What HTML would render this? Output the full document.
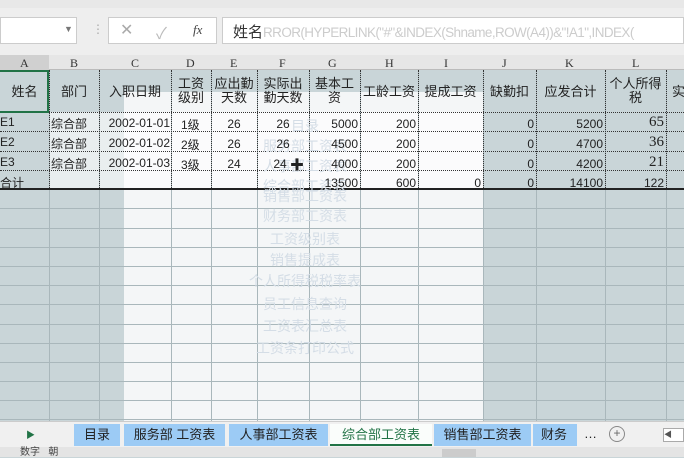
<!DOCTYPE html><html><head><meta charset="utf-8"><style>
*{margin:0;padding:0;box-sizing:border-box}
body{width:684px;height:457px;overflow:hidden;background:#c9d5d8;font-family:"Liberation Sans","Noto Sans CJK SC",sans-serif;position:relative;font-size:12px;color:#222}
.a{position:absolute}
.vl{position:absolute;top:70px;height:352px;width:0;border-left:1px solid #a9b7bb}
.hl{position:absolute;left:0;width:684px;height:0;border-top:1px solid #a9b7bb}
.dv{position:absolute;top:70px;height:120px;width:0;border-left:1px dotted #333}
.dh{position:absolute;left:0;width:684px;height:0;border-top:1px dotted #333}
.c{position:absolute;text-align:center;line-height:14px}
.r{position:absolute;text-align:right}
.tab{position:absolute;top:424px;height:22px;background:#9ccbf5;font-size:13px;line-height:22px;text-align:center;color:#222}
.wm{position:absolute;left:230px;width:150px;text-align:center;color:#d4dde6;font-size:14px}
</style></head><body>
<div class="a" style="left:0;top:0;width:684px;height:8px;background:#e8e8e8"></div>
<div class="a" style="left:0;top:8px;width:684px;height:47px;background:#eeeeee"></div>
<div class="a" style="left:0;top:17px;width:77px;height:27px;background:#fff;border:1px solid #ccc"></div>
<div class="a" style="left:64px;top:24px;color:#777;font-size:9px">▼</div>
<div class="a" style="left:92px;top:22px;color:#aaa">⋮</div>
<div class="a" style="left:108px;top:17px;width:109px;height:27px;background:#fff;border:1px solid #ccc"></div>
<div class="a" style="left:120px;top:20px;color:#aaa;font-size:16px">✕</div>
<div class="a" style="left:156px;top:20px;color:#bbb;font-size:16px">✓</div>
<div class="a" style="left:193px;top:22px;color:#444;font-style:italic;font-family:'Liberation Serif',serif;font-size:13px">fx</div>
<div class="a" style="left:222px;top:17px;width:462px;height:27px;background:#fff;border:1px solid #ccc;overflow:hidden"></div>
<div class="a" style="left:233px;top:21px;font-size:15px;color:#333;white-space:nowrap;width:451px;overflow:hidden">姓名<span style="color:#ccc;font-size:13.5px;letter-spacing:-0.6px">RROR(HYPERLINK("#"&amp;INDEX(Shname,ROW(A4))&amp;"!A1",INDEX(</span></div>
<div class="a" style="left:0;top:55px;width:684px;height:15px;background:#e6e6e6;border-bottom:1px solid #bbb"></div>
<div class="a" style="left:0;top:55px;width:49px;height:15px;background:#d0d0d0"></div>
<div class="a" style="top:56px;left:0;width:684px;font-family:'Liberation Serif',serif;font-size:12px;color:#333">
<span class="a" style="left:20px">A</span><span class="a" style="left:70px">B</span><span class="a" style="left:131px">C</span><span class="a" style="left:186px">D</span><span class="a" style="left:230px">E</span><span class="a" style="left:279px">F</span><span class="a" style="left:328px">G</span><span class="a" style="left:385px">H</span><span class="a" style="left:444px">I</span><span class="a" style="left:502px">J</span><span class="a" style="left:565px">K</span><span class="a" style="left:632px">L</span></div>
<div class="a" style="left:124px;top:92px;width:360px;height:330px;background:#f4f6f7"></div>
<div class="a" style="left:49px;top:112px;width:435px;height:77px;background:#fff;opacity:.6"></div>
<div class="vl" style="left:49px"></div><div class="vl" style="left:99px"></div><div class="vl" style="left:171px"></div><div class="vl" style="left:211px"></div><div class="vl" style="left:257px"></div><div class="vl" style="left:309px"></div><div class="vl" style="left:360px"></div><div class="vl" style="left:418px"></div><div class="vl" style="left:483px"></div><div class="vl" style="left:536px"></div><div class="vl" style="left:605px"></div><div class="vl" style="left:666px"></div>
<div class="hl" style="top:208px"></div><div class="hl" style="top:228px"></div><div class="hl" style="top:247px"></div><div class="hl" style="top:266px"></div><div class="hl" style="top:285px"></div><div class="hl" style="top:304px"></div><div class="hl" style="top:324px"></div><div class="hl" style="top:343px"></div><div class="hl" style="top:362px"></div><div class="hl" style="top:381px"></div><div class="hl" style="top:400px"></div><div class="hl" style="top:419px"></div>
<div class="dv" style="left:49px"></div><div class="dv" style="left:99px"></div><div class="dv" style="left:171px"></div><div class="dv" style="left:211px"></div><div class="dv" style="left:257px"></div><div class="dv" style="left:309px"></div><div class="dv" style="left:360px"></div><div class="dv" style="left:418px"></div><div class="dv" style="left:483px"></div><div class="dv" style="left:536px"></div><div class="dv" style="left:605px"></div><div class="dv" style="left:666px"></div>
<div class="dh" style="top:112px"></div><div class="dh" style="top:131px"></div><div class="dh" style="top:151px"></div><div class="dh" style="top:170px"></div>
<div class="a" style="left:0;top:188px;width:684px;height:2px;background:#222"></div>
<div class="a" style="left:-2px;top:70px;width:51px;height:43px;border:2px solid #217346"></div>
<div class="wm" style="top:116px">目录</div>
<div class="wm" style="top:136px">服务部工资表</div>
<div class="wm" style="top:156px">人事部工资表</div>
<div class="wm" style="top:176px">综合部工资表</div>
<div class="wm" style="top:186px">销售部工资表</div>
<div class="wm" style="top:206px">财务部工资表</div>
<div class="wm" style="top:229px">工资级别表</div>
<div class="wm" style="top:250px">销售提成表</div>
<div class="wm" style="top:271px">个人所得税税率表</div>
<div class="wm" style="top:294px">员工信息查询</div>
<div class="wm" style="top:316px">工资表汇总表</div>
<div class="wm" style="top:338px">工资条打印公式</div>
<div style="font-size:13px">
<div class="c" style="left:0;width:49px;top:85px">姓名</div>
<div class="c" style="left:49px;width:50px;top:85px">部门</div>
<div class="c" style="left:99px;width:72px;top:85px">入职日期</div>
<div class="c" style="left:171px;width:40px;top:77px">工资<br>级别</div>
<div class="c" style="left:211px;width:46px;top:77px">应出勤<br>天数</div>
<div class="c" style="left:257px;width:52px;top:77px">实际出<br>勤天数</div>
<div class="c" style="left:309px;width:51px;top:77px">基本工<br>资</div>
<div class="c" style="left:360px;width:58px;top:85px">工龄工资</div>
<div class="c" style="left:418px;width:65px;top:85px">提成工资</div>
<div class="c" style="left:483px;width:53px;top:85px">缺勤扣</div>
<div class="c" style="left:536px;width:69px;top:85px">应发合计</div>
<div class="c" style="left:605px;width:61px;top:77px">个人所得<br>税</div>
<div class="c" style="left:672px;top:85px">实</div>
</div>
<div style="font-size:12px">
<div class="a" style="left:0;top:115px">E1</div><div class="a" style="left:0;top:135px">E2</div><div class="a" style="left:0;top:155px">E3</div><div class="a" style="left:0;top:174px">合计</div>
<div class="a" style="left:51px;top:115px">综合部</div><div class="a" style="left:51px;top:135px">综合部</div><div class="a" style="left:51px;top:155px">综合部</div>
<div class="r" style="right:514px;top:116px">2002-01-01</div><div class="r" style="right:514px;top:136px">2002-01-02</div><div class="r" style="right:514px;top:156px">2002-01-03</div>
<div class="a" style="left:181px;top:116px">1级</div><div class="a" style="left:181px;top:136px">2级</div><div class="a" style="left:181px;top:156px">3级</div>
<div class="c" style="left:211px;width:46px;top:117px">26</div><div class="c" style="left:211px;width:46px;top:137px">26</div><div class="c" style="left:211px;width:46px;top:157px">24</div>
<div class="c" style="left:257px;width:52px;top:117px">26</div><div class="c" style="left:257px;width:52px;top:137px">26</div><div class="c" style="left:257px;width:46px;top:157px">24</div>
<div class="a" style="left:290px;top:155px;font-size:14px;font-weight:bold">✚</div>
<div class="r" style="right:326px;top:117px">5000</div><div class="r" style="right:326px;top:137px">4500</div><div class="r" style="right:326px;top:157px">4000</div><div class="r" style="right:326px;top:176px">13500</div>
<div class="r" style="right:268px;top:117px">200</div><div class="r" style="right:268px;top:137px">200</div><div class="r" style="right:268px;top:157px">200</div><div class="r" style="right:268px;top:176px">600</div>
<div class="r" style="right:203px;top:176px">0</div>
<div class="r" style="right:150px;top:117px">0</div><div class="r" style="right:150px;top:137px">0</div><div class="r" style="right:150px;top:157px">0</div><div class="r" style="right:150px;top:176px">0</div>
<div class="r" style="right:81px;top:117px">5200</div><div class="r" style="right:81px;top:137px">4700</div><div class="r" style="right:81px;top:157px">4200</div><div class="r" style="right:81px;top:176px">14100</div>
<div class="r" style="right:20px;top:114px;font-size:15px;font-family:'Liberation Serif',serif">65</div><div class="r" style="right:20px;top:134px;font-size:15px;font-family:'Liberation Serif',serif">36</div><div class="r" style="right:20px;top:154px;font-size:15px;font-family:'Liberation Serif',serif">21</div><div class="r" style="right:20px;top:176px">122</div>
</div>
<div class="a" style="left:0;top:421px;width:684px;height:26px;background:#f0f0f0;border-top:1px solid #ccc"></div>
<div class="a" style="left:26px;top:428px;color:#217346;font-size:9px">▶</div>
<div class="tab" style="left:74px;width:46px">目录</div>
<div class="tab" style="left:124px;width:101px">服务部 工资表</div>
<div class="tab" style="left:229px;width:99px">人事部工资表</div>
<div class="tab" style="left:330px;width:102px;background:#fafdfb;color:#217346;border-bottom:2px solid #217346">综合部工资表</div>
<div class="tab" style="left:434px;width:97px">销售部工资表</div>
<div class="tab" style="left:533px;width:44px;overflow:hidden;text-align:left;padding-left:8px">财务部</div>
<div class="a" style="left:584px;top:426px;font-size:13px">…</div>
<div class="a" style="left:609px;top:426px;width:16px;height:16px;border:1px solid #888;border-radius:50%;text-align:center;line-height:13px;color:#666">+</div>
<div class="a" style="left:663px;top:428px;width:21px;height:14px;border:1px solid #aaa;background:#fff;font-size:8px;color:#555">◀</div>
<div class="a" style="left:0;top:447px;width:684px;height:10px;background:#e4e4e4"></div>
<div class="a" style="left:20px;top:448px;font-size:10px;color:#444;line-height:10px">数字 &nbsp; 朝</div>
<div class="a" style="left:442px;top:449px;width:34px;height:8px;background:#ccc"></div>
</body></html>
